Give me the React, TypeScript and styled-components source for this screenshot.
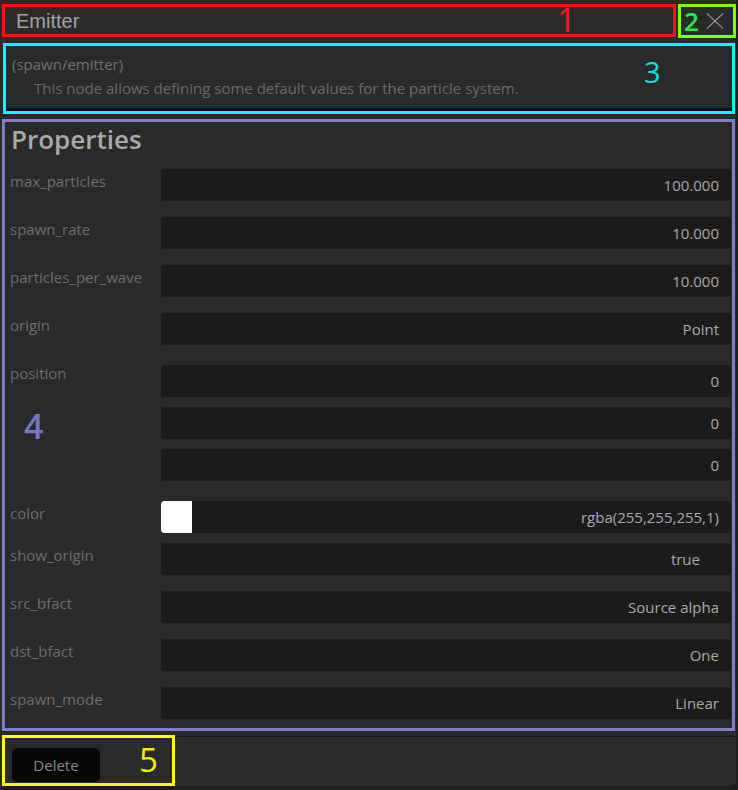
import React from 'react';
import styled, { createGlobalStyle } from 'styled-components';

const GlobalStyle = createGlobalStyle`
    html, body {
        margin: 0;
        padding: 0;
        background: #1e1e1e;
    }
    body {
        width: 738px;
        height: 790px;
        overflow: hidden;
        font-family: 'Open Sans', 'Noto Sans', sans-serif;
    }
`;

const Panel = styled.div`
    width: 736px;
    background: #2a2a2a;
    padding: 4px 0 0 2px;
    box-sizing: border-box;
    border-bottom-right-radius: 6px;
`;

const Annotated = styled.div<{ $color: string }>`
    position: relative;
    box-sizing: border-box;
    border: 3px solid ${(p) => p.$color};
`;

const Marker = styled.span<{ $color: string; $size: number; $left: number; $top: number; $bold?: boolean }>`
    position: absolute;
    left: ${(p) => p.$left}px;
    top: ${(p) => p.$top}px;
    color: ${(p) => p.$color};
    font-size: ${(p) => p.$size}px;
    font-weight: ${(p) => (p.$bold ? 600 : 400)};
    line-height: 1;
    pointer-events: none;
`;

const Header = styled.div`
    display: flex;
    gap: 2px;
    height: 34px;
`;

const TitleBox = styled(Annotated)`
    width: 674px;
    height: 33px;
    display: flex;
    align-items: center;
    padding-left: 11px;
    background: #2b2b2b;

    ${Marker} {
        line-height: 26px;
    }
`;

const Title = styled.span`
    font-family: 'Liberation Sans', Arial, sans-serif;
    font-size: 20px;
    color: #a3a3a3;
    margin-top: 1px;
`;

const CloseBox = styled(Annotated)`
    width: 58px;
    height: 34px;
    display: flex;
    align-items: center;
    justify-content: flex-end;
    padding-right: 9px;

    ${Marker} {
        font-weight: 600;
        line-height: 28px;
    }
`;

const InfoBox = styled(Annotated)`
    width: 732px;
    height: 71px;
    margin: 5px 0 0 1px;
    padding: 8px 6px 0 6px;
    box-shadow: inset 0 -3px 0 #141414;
`;

const NodePath = styled.div`
    font-size: 15px;
    color: #717171;
    line-height: 20px;
`;

const NodeDesc = styled.div`
    font-size: 15px;
    color: #6b6b6b;
    line-height: 20px;
    margin: 4px 0 0 22px;
`;

const PropsBox = styled(Annotated)`
    width: 733px;
    height: 612px;
    margin-top: 5px;
    padding: 3px 1px 0 0;
`;

const Heading = styled.h2`
    margin: 0;
    font-size: 26px;
    font-weight: 600;
    line-height: 28px;
    color: #a9a9a9;
    padding-left: 6px;
`;

const Row = styled.div<{ $gap: number }>`
    display: grid;
    grid-template-columns: 156px 1fr;
    margin-top: ${(p) => p.$gap}px;
`;

const Label = styled.div<{ $offset: number }>`
    font-size: 15px;
    line-height: 20px;
    color: #6e6e6e;
    margin-top: ${(p) => p.$offset}px;
    padding-left: 5px;
`;

const Inputs = styled.div`
    display: flex;
    flex-direction: column;
    gap: 10px;
`;

const Field = styled.div<{ $pad: number }>`
    height: 32px;
    background: #1b1b1b;
    border-radius: 3px;
    display: flex;
    align-items: center;
    justify-content: flex-end;
    padding-right: ${(p) => p.$pad}px;
    font-size: 15px;
    color: #a9a9a9;
    position: relative;
    overflow: hidden;
`;

const Swatch = styled.div`
    position: absolute;
    left: 0;
    top: 0;
    width: 31px;
    height: 32px;
    background: #ffffff;
    border-radius: 3px 0 0 3px;
`;

const Footer = styled.div`
    margin-top: 5px;
    border-top: 1px solid #161616;
    height: 50px;
    box-sizing: border-box;
`;

const DeleteBox = styled(Annotated)`
    width: 173px;
    height: 51px;
    margin-top: -2px;
    padding: 10px 0 0 7px;
`;

const DeleteButton = styled.button`
    width: 88px;
    height: 34px;
    border: none;
    border-radius: 5px;
    background: #070707;
    color: #8a8a8a;
    font-family: 'Open Sans', 'Noto Sans', sans-serif;
    font-size: 15px;
    padding: 0;
`;

type Prop = { label: string; values: string[]; gap: number; offset?: number; pad?: number; swatch?: boolean };

const props: Prop[] = [
    { label: 'max_particles', values: ['100.000'], gap: 16 },
    { label: 'spawn_rate', values: ['10.000'], gap: 16 },
    { label: 'particles_per_wave', values: ['10.000'], gap: 16 },
    { label: 'origin', values: ['Point'], gap: 16 },
    { label: 'position', values: ['0', '0', '0'], gap: 20, offset: -2 },
    { label: 'color', values: ['rgba(255,255,255,1)'], gap: 20, swatch: true },
    { label: 'show_origin', values: ['true'], gap: 10, pad: 31 },
    { label: 'src_bfact', values: ['Source alpha'], gap: 16 },
    { label: 'dst_bfact', values: ['One'], gap: 16 },
    { label: 'spawn_mode', values: ['Linear'], gap: 16 },
];

const CloseIcon = () => (
    <svg width="18" height="16" viewBox="0 0 18 16">
        <line x1="1" y1="0.5" x2="17" y2="15.5" stroke="#8c8c8c" strokeWidth="1.3" />
        <line x1="17" y1="0.5" x2="1" y2="15.5" stroke="#8c8c8c" strokeWidth="1.3" />
    </svg>
);

const App: React.FunctionComponent<{}> = () => {
    return (
        <>
            <GlobalStyle />
            <Panel>
                <Header>
                    <TitleBox $color="#ff1010">
                        <Title>Emitter</Title>
                        <Marker $color="#ff1a1a" $size={33} $left={552} $top={0}>1</Marker>
                    </TitleBox>
                    <CloseBox $color="#7fff00">
                        <Marker $color="#22ee44" $size={26} $left={3} $top={0}>2</Marker>
                        <CloseIcon />
                    </CloseBox>
                </Header>

                <InfoBox $color="#00ffff">
                    <NodePath>(spawn/emitter)</NodePath>
                    <NodeDesc>This node allows defining some default values for the particle system.</NodeDesc>
                    <Marker $color="#11e0e0" $size={29} $left={638} $top={11}>3</Marker>
                </InfoBox>

                <PropsBox $color="#7f7fc8">
                    <Heading>Properties</Heading>
                    {props.map((prop) => (
                        <Row key={prop.label} $gap={prop.gap}>
                            <Label $offset={prop.offset ?? 2}>{prop.label}</Label>
                            <Inputs>
                                {prop.values.map((value, i) => (
                                    <Field key={i} $pad={prop.pad ?? 12}>
                                        {prop.swatch && <Swatch />}
                                        {value}
                                    </Field>
                                ))}
                            </Inputs>
                        </Row>
                    ))}
                    <Marker $color="#7878c0" $size={34} $left={19} $top={287} $bold>4</Marker>
                </PropsBox>

                <Footer>
                    <DeleteBox $color="#ffff00">
                        <DeleteButton>Delete</DeleteButton>
                        <Marker $color="#eeee00" $size={33} $left={134} $top={5}>5</Marker>
                    </DeleteBox>
                </Footer>
            </Panel>
        </>
    );
};

export default App;
